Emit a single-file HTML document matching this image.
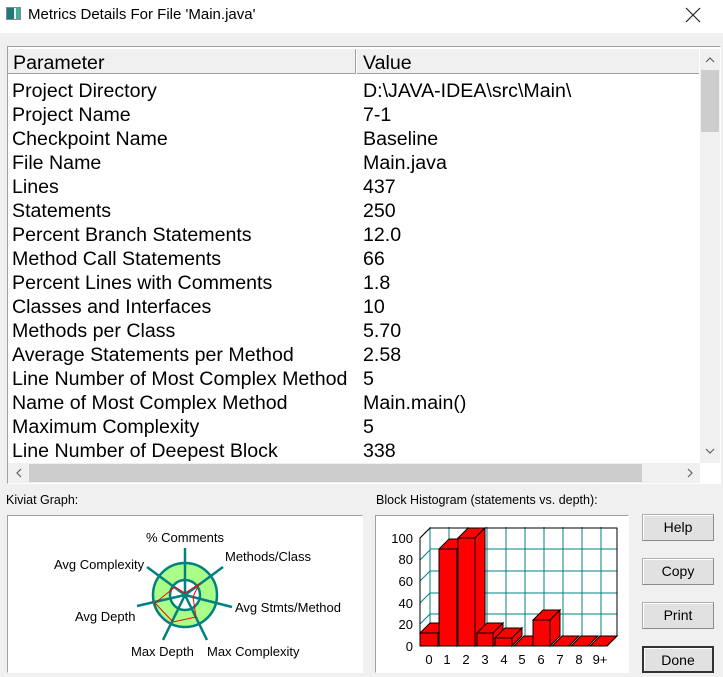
<!DOCTYPE html>
<html><head><meta charset="utf-8"><style>
*{margin:0;padding:0;box-sizing:border-box}
body{width:723px;height:677px;background:#f0f0f0;font-family:"Liberation Sans",Arial,sans-serif;position:relative;overflow:hidden}
.abs{position:absolute}
.title{left:0;top:0;width:723px;height:33px;background:#fff}
.tt{left:28px;top:6px;font-size:15px;color:#000}
.frame{left:7px;top:46px;width:714px;height:438px;border:1px solid #a0a0a0;border-right-color:#fff;border-bottom-color:#fff;background:#fff}
.row{position:absolute;left:5px;font-size:19.6px;line-height:24px;color:#000;white-space:nowrap}
.hdr{left:8px;top:49px;width:691px;height:25px;background:#f0f0f0;border-bottom:1px solid #a0a0a0}
.btn{position:absolute;left:642px;width:72px;height:27px;background:#e1e1e1;border:1px solid #adadad;border-right-color:#8a8a8a;border-bottom-color:#8a8a8a;font-size:14px;text-align:center;line-height:25px;box-shadow:inset 1px 1px 0 #fff}
.box{position:absolute;background:#fff;border:1px solid #a0a0a0;border-right-color:#fff;border-bottom-color:#fff}
.lbl{position:absolute;font-size:12.5px}
</style></head><body>
<div class="abs title"></div>
<div class="abs" style="left:6px;top:7px;width:15px;height:13px;border:1px solid #888;background:linear-gradient(90deg,#1f7a7a 0 55%,#eee 55% 70%,#4a9 70%)"></div>
<div class="abs tt">Metrics Details For File 'Main.java'</div>
<svg class="abs" style="left:685px;top:7px" width="16" height="16"><path d="M1,1L15,15M15,1L1,15" stroke="#222" stroke-width="1.2"/></svg>
<div class="abs frame"></div>
<div class="abs hdr"></div>
<div class="abs" style="left:355px;top:49px;width:2px;height:25px;border-left:1px solid #a0a0a0;border-right:1px solid #fff"></div>
<div class="abs" style="left:8px;top:51px">
<div class="row" style="top:0">Parameter</div><div class="row" style="top:0;left:355px">Value</div>
</div>
<div class="abs" style="left:7px;top:79px">
<div class="row" style="top:0">Project Directory</div><div class="row" style="top:0;left:356px">D:\JAVA-IDEA\src\Main\</div>
<div class="row" style="top:24px">Project Name</div><div class="row" style="top:24px;left:356px">7-1</div>
<div class="row" style="top:48px">Checkpoint Name</div><div class="row" style="top:48px;left:356px">Baseline</div>
<div class="row" style="top:72px">File Name</div><div class="row" style="top:72px;left:356px">Main.java</div>
<div class="row" style="top:96px">Lines</div><div class="row" style="top:96px;left:356px">437</div>
<div class="row" style="top:120px">Statements</div><div class="row" style="top:120px;left:356px">250</div>
<div class="row" style="top:144px">Percent Branch Statements</div><div class="row" style="top:144px;left:356px">12.0</div>
<div class="row" style="top:168px">Method Call Statements</div><div class="row" style="top:168px;left:356px">66</div>
<div class="row" style="top:192px">Percent Lines with Comments</div><div class="row" style="top:192px;left:356px">1.8</div>
<div class="row" style="top:216px">Classes and Interfaces</div><div class="row" style="top:216px;left:356px">10</div>
<div class="row" style="top:240px">Methods per Class</div><div class="row" style="top:240px;left:356px">5.70</div>
<div class="row" style="top:264px">Average Statements per Method</div><div class="row" style="top:264px;left:356px">2.58</div>
<div class="row" style="top:288px">Line Number of Most Complex Method</div><div class="row" style="top:288px;left:356px">5</div>
<div class="row" style="top:312px">Name of Most Complex Method</div><div class="row" style="top:312px;left:356px">Main.main()</div>
<div class="row" style="top:336px">Maximum Complexity</div><div class="row" style="top:336px;left:356px">5</div>
<div class="row" style="top:360px">Line Number of Deepest Block</div><div class="row" style="top:360px;left:356px">338</div>
</div>
<!-- scrollbars -->
<div class="abs" style="left:700px;top:49px;width:20px;height:414px;background:#f0f0f0"></div>
<div class="abs" style="left:701px;top:70px;width:18px;height:62px;background:#cdcdcd"></div>
<svg class="abs" style="left:700px;top:49px" width="20" height="414"><path d="M6,13L10,9L14,13" fill="none" stroke="#606060" stroke-width="1.2"/><path d="M6,400L10,404L14,400" fill="none" stroke="#606060" stroke-width="1.2"/></svg>
<div class="abs" style="left:8px;top:463px;width:692px;height:20px;background:#f0f0f0"></div>
<div class="abs" style="left:29px;top:464px;width:613px;height:18px;background:#cdcdcd"></div>
<svg class="abs" style="left:8px;top:463px" width="692" height="20"><path d="M13,6L9,10L13,14" fill="none" stroke="#606060" stroke-width="1.2"/><path d="M680,6L684,10L680,14" fill="none" stroke="#606060" stroke-width="1.2"/></svg>
<div class="lbl" style="left:6px;top:493px">Kiviat Graph:</div>
<div class="lbl" style="left:376px;top:493px">Block Histogram (statements vs. depth):</div>
<div class="box" style="left:7px;top:515px;width:356px;height:158px"></div>
<div class="box" style="left:375px;top:515px;width:254px;height:158px"></div>
<svg class="abs" style="left:0;top:0" width="723" height="677" font-family="Liberation Sans, Arial, sans-serif" font-size="13">
<g stroke="#008080" stroke-width="2.5">
<circle cx="185" cy="595" r="32" fill="#aaff88"/>
<circle cx="185" cy="595" r="15" fill="#fff"/>
<line x1="185" y1="595" x2="185" y2="548"/><line x1="185" y1="595" x2="223" y2="567"/>
<line x1="185" y1="595" x2="232" y2="607"/><line x1="185" y1="595" x2="207" y2="640"/>
<line x1="185" y1="595" x2="163" y2="640"/><line x1="185" y1="595" x2="137" y2="606"/>
<line x1="185" y1="595" x2="147" y2="567"/>
</g>
<polygon points="185,593 199,584 193,597 196,617 173,622 155,603 175,587" fill="none" stroke="#f00" stroke-width="1"/>
<text x="146" y="542">% Comments</text><text x="225" y="561">Methods/Class</text>
<text x="54" y="569">Avg Complexity</text><text x="235" y="612">Avg Stmts/Method</text>
<text x="75" y="621">Avg Depth</text><text x="131" y="656">Max Depth</text><text x="207" y="656">Max Complexity</text>
<g stroke="#008080" stroke-width="1" fill="none">
<line x1="430" y1="527" x2="430" y2="636"/>
<line x1="449" y1="527" x2="449" y2="636"/><line x1="468" y1="527" x2="468" y2="636"/>
<line x1="487" y1="527" x2="487" y2="636"/><line x1="506" y1="527" x2="506" y2="636"/>
<line x1="525" y1="527" x2="525" y2="636"/><line x1="544" y1="527" x2="544" y2="636"/>
<line x1="563" y1="527" x2="563" y2="636"/><line x1="582" y1="527" x2="582" y2="636"/>
<line x1="601" y1="527" x2="601" y2="636"/>
<line x1="430" y1="549" x2="617" y2="549"/><line x1="430" y1="571" x2="617" y2="571"/>
<line x1="430" y1="593" x2="617" y2="593"/><line x1="430" y1="614" x2="617" y2="614"/>
<line x1="420" y1="538" x2="430" y2="528"/><line x1="420" y1="560" x2="430" y2="550"/>
<line x1="420" y1="581" x2="430" y2="571"/><line x1="420" y1="603" x2="430" y2="593"/>
<line x1="420" y1="624" x2="430" y2="614"/>
</g>
<polyline points="420,646 420,538 430,528 617,528 617,636 607,646 420,646" fill="none" stroke="#000"/>
<g fill="#f00" stroke="#000" stroke-width="1">
<path d="M420,633h18l10,-10h-18z"/><rect x="420" y="633" width="18" height="13"/><path d="M438,633l10,-10v13l-10,10z"/>
<path d="M439,549h18l10,-10h-18z"/><rect x="439" y="549" width="18" height="97"/><path d="M457,549l10,-10v97l-10,10z"/>
<path d="M458,538h17l10,-10h-17z"/><rect x="458" y="538" width="17" height="108"/><path d="M475,538l10,-10v108l-10,10z"/>
<path d="M477,633h16l10,-10h-16z"/><rect x="477" y="633" width="16" height="13"/><path d="M493,633l10,-10v13l-10,10z"/>
<path d="M495,638h17l10,-10h-17z"/><rect x="495" y="638" width="17" height="8"/><path d="M512,638l10,-10v8l-10,10z"/>
<path d="M514,646h17l10,-10h-17z"/>
<path d="M533,620h17l10,-10h-17z"/><rect x="533" y="620" width="17" height="26"/><path d="M550,620l10,-10v26l-10,10z"/>
<path d="M552,646h17l10,-10h-17z"/><path d="M571,646h17l10,-10h-17z"/><path d="M590,646h17l10,-10h-17z"/>
</g>
<g font-size="13" text-anchor="end"><text x="413" y="543">100</text><text x="413" y="564">80</text><text x="413" y="586">60</text><text x="413" y="608">40</text><text x="413" y="629">20</text><text x="413" y="651">0</text></g>
<g font-size="13" text-anchor="middle"><text x="429" y="664">0</text><text x="447" y="664">1</text><text x="466" y="664">2</text><text x="485" y="664">3</text><text x="504" y="664">4</text><text x="522" y="664">5</text><text x="541" y="664">6</text><text x="560" y="664">7</text><text x="579" y="664">8</text><text x="600" y="664">9+</text></g>
</svg>
<div class="btn" style="top:514px">Help</div>
<div class="btn" style="top:558px">Copy</div>
<div class="btn" style="top:602px">Print</div>
<div class="btn" style="top:646px;border:2px solid #333">Done</div>
</body></html>
